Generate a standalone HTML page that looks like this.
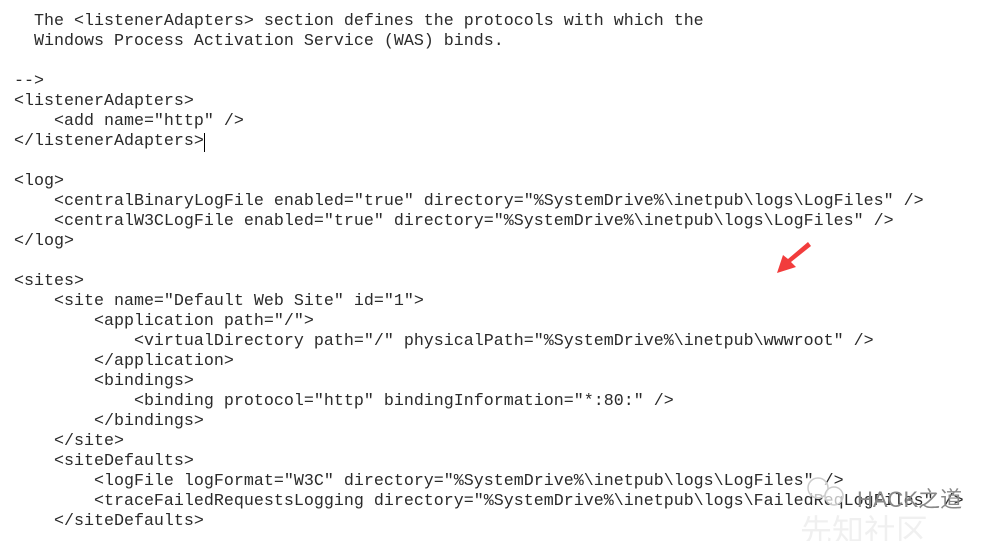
<!DOCTYPE html>
<html><head><meta charset="utf-8"><style>
html,body{margin:0;padding:0;background:#fff;width:1002px;height:541px;overflow:hidden;position:relative}
pre{position:absolute;left:14px;top:12px;margin:0;font-family:"Liberation Mono",monospace;font-size:16.67px;line-height:20px;color:#2a2a2a}
.wm{position:absolute;font-family:"Liberation Sans","Noto Sans CJK SC",sans-serif;color:#bbb}
.cur{position:absolute;left:204px;top:133px;width:1px;height:19px;background:#000}
</style></head><body>
<pre>  The &lt;listenerAdapters&gt; section defines the protocols with which the
  Windows Process Activation Service (WAS) binds.

--&gt;
&lt;listenerAdapters&gt;
    &lt;add name="http" /&gt;
&lt;/listenerAdapters&gt;

&lt;log&gt;
    &lt;centralBinaryLogFile enabled="true" directory="%SystemDrive%\inetpub\logs\LogFiles" /&gt;
    &lt;centralW3CLogFile enabled="true" directory="%SystemDrive%\inetpub\logs\LogFiles" /&gt;
&lt;/log&gt;

&lt;sites&gt;
    &lt;site name="Default Web Site" id="1"&gt;
        &lt;application path="/"&gt;
            &lt;virtualDirectory path="/" physicalPath="%SystemDrive%\inetpub\wwwroot" /&gt;
        &lt;/application&gt;
        &lt;bindings&gt;
            &lt;binding protocol="http" bindingInformation="*:80:" /&gt;
        &lt;/bindings&gt;
    &lt;/site&gt;
    &lt;siteDefaults&gt;
        &lt;logFile logFormat="W3C" directory="%SystemDrive%\inetpub\logs\LogFiles" /&gt;
        &lt;traceFailedRequestsLogging directory="%SystemDrive%\inetpub\logs\FailedReqLogFiles" /&gt;
    &lt;/siteDefaults&gt;</pre>
<div class="cur"></div>
<svg style="position:absolute;left:0;top:0" width="1002" height="541">
<polygon points="808,242 811,246 791,262 796,267 777,273 783,255 788,259" fill="#f23c3c"/>
<circle cx="818" cy="488" r="10" fill="#fff" fill-opacity="0.7" stroke="#ccc" stroke-width="1.5"/>
<circle cx="834" cy="496" r="9" fill="#fff" fill-opacity="0.7" stroke="#ccc" stroke-width="1.5"/>
</svg>
<div class="wm" style="left:857px;top:482px;font-size:22px;color:#888">HACK之道</div>
<div class="wm" style="left:800px;top:506px;font-size:32px;color:#f0f0f0">先知社区</div>
</body></html>
